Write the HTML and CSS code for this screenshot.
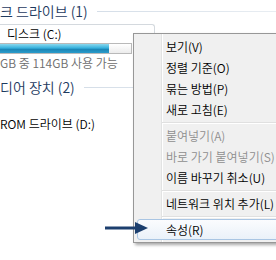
FILE: index.html
```html
<html>
    <head>
        <title>컴퓨터</title>
        <meta charset="UTF-8">
        <link rel="stylesheet" href="styles.css">
    </head>
    <body>
        <div class="pane">
            <div class="group"><span class="titulo">크 드라이브 (1)</span><span class="regla"></span></div>
            <div class="tile">
                <div class="nombre">디스크 (C:)</div>
                <div class="barra"><div class="lleno"></div></div>
                <div class="libre">GB 중 114GB 사용 가능</div>
            </div>
            <div class="group grupo2"><span class="titulo">디어 장치 (2)</span><span class="regla"></span></div>
            <div class="nombre cd">ROM 드라이브 (D:)</div>
        </div>

        <div class="menu">
            <div class="item">보기(V)</div>
            <div class="item">정렬 기준(O)</div>
            <div class="item">묶는 방법(P)</div>
            <div class="item">새로 고침(E)</div>
            <div class="sep"></div>
            <div class="item off">붙여넣기(A)</div>
            <div class="item off">바로 가기 붙여넣기(S)</div>
            <div class="item">이름 바꾸기 취소(U)</div>
            <div class="sep"></div>
            <div class="item">네트워크 위치 추가(L)</div>
            <div class="sep"></div>
            <div class="item sel">속성(R)</div>
        </div>

        <svg class="flecha" width="44" height="14" viewBox="0 0 44 14">
            <path d="M0 7 H32" stroke="#1c3f6e" stroke-width="3"/>
            <path d="M30 1 L43 7 L30 13 Z" fill="#1c3f6e"/>
        </svg>
    </body>
</html>
```

FILE: styles.css
```css
body{
    margin: 0px;
    width: 276px;
    height: 260px;
    overflow: hidden;
    background-color: white;
    font-family: "Noto Sans CJK KR", "Noto Sans", sans-serif;
    font-size: 12px;
    font-weight: 350;
    position: relative;
}

.pane{
    padding-top: 3px;
}

.group{
    display: flex;
    align-items: center;
    gap: 9px;
    height: 17px;
    line-height: 17px;
    font-size: 14px;
    color: #1e3a5f;
}

.regla{
    flex: 1;
    height: 1px;
    background: linear-gradient(to right, #d5dee8, #e8edf2);
}

.tile{
    width: 155px;
    margin-top: 4px;
    border-top: 1px solid #d4d9de;
    border-right: 1px solid #d4d9de;
    border-top-right-radius: 3px;
    box-sizing: border-box;
    padding-top: 1px;
}

.nombre{
    height: 16px;
    line-height: 16px;
    color: #000;
    padding-left: 7px;
}

.barra{
    width: 133px;
    height: 11px;
    margin-top: 1px;
    margin-left: -1px;
    border: 1px solid #b9b9b9;
    box-sizing: border-box;
    background: linear-gradient(#ffffff, #ececec);
}

.lleno{
    width: 109px;
    height: 100%;
    background: linear-gradient(#8ad8ee, #35b0dc 45%, #1b86b6 60%, #2b9ccb);
}

.libre{
    height: 16px;
    line-height: 16px;
    margin-top: 1px;
    color: #6d6d6d;
}

.grupo2{
    margin-top: 8px;
}

.cd{
    margin-top: 20px;
    padding-left: 0px;
}

.menu{
    position: absolute;
    left: 133px;
    top: 33px;
    width: 160px;
    padding: 2px;
    border: 1px solid #979797;
    background-color: #f0f0f0;
    background-image: linear-gradient(to right, transparent 27px, #e2e3e3 27px, #e2e3e3 28px, #ffffff 28px, #ffffff 29px, transparent 29px);
    box-shadow: 2px 2px 3px rgba(0,0,0,0.35);
}

.item{
    height: 21px;
    line-height: 21px;
    padding-left: 30px;
    color: #000;
    white-space: nowrap;
}

.off{
    color: #8e8e8e;
}

.sel{
    margin-left: 1px;
    padding-left: 28px;
    height: 19px;
    line-height: 19px;
    border: 1px solid #a9c5e3;
    border-radius: 3px;
    background: linear-gradient(#fbfcfe, #eaf1f9);
}

.sep{
    height: 5px;
    margin-left: 26px;
    background: linear-gradient(transparent 2px, #e0e0e0 2px, #e0e0e0 3px, #ffffff 3px, #ffffff 4px, transparent 4px);
}

.flecha{
    position: absolute;
    left: 105px;
    top: 221px;
}
```
